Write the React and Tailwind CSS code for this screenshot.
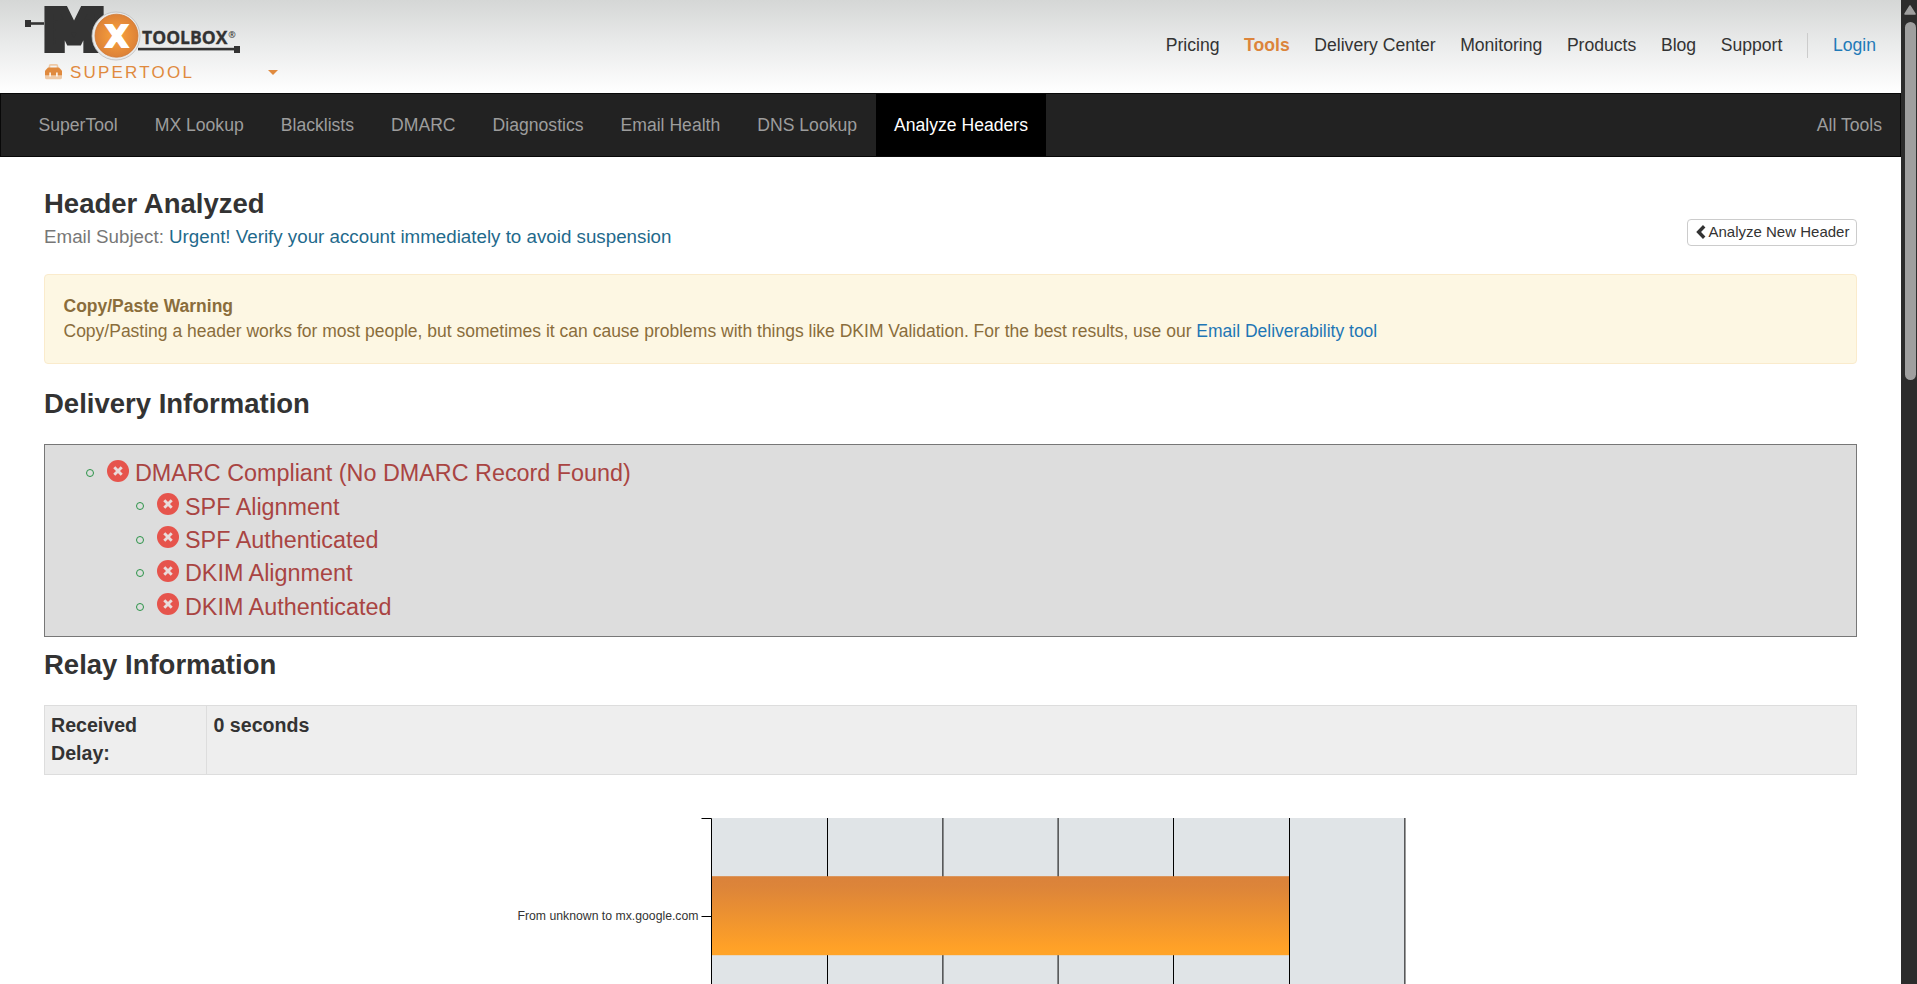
const topLinks = ["Pricing", "Tools", "Delivery Center", "Monitoring", "Products", "Blog", "Support"];

const toolLinks = [
  "SuperTool",
  "MX Lookup",
  "Blacklists",
  "DMARC",
  "Diagnostics",
  "Email Health",
  "DNS Lookup",
  "Analyze Headers",
];

function Logo() {
  return (
    <svg className="block overflow-visible" width="240" height="61" viewBox="0 0 240 61" role="img">
      <defs>
        <radialGradient id="disc">
          <stop offset="0" stopColor="#fba43c" />
          <stop offset="1" stopColor="#dd8238" />
        </radialGradient>
      </defs>
      <rect x="25" y="20" width="6" height="7" fill="#333" />
      <rect x="31" y="22.2" width="13" height="2.6" fill="#333" />
      <text
        transform="translate(43.6 49.3) scale(1.17 1)"
        fontFamily="'DejaVu Sans', sans-serif"
        fontWeight="700"
        fontSize="52.5"
        fill="#333"
        stroke="#333"
        strokeWidth="8"
        strokeMiterlimit="2"
      >
        M
      </text>
      <rect x="138" y="47.8" width="97" height="2.6" fill="#333" />
      <rect x="234" y="46" width="6" height="7" fill="#333" />
      <circle cx="116" cy="36" r="24" fill="#e9eaea" stroke="#bdbdbd" strokeWidth="0.8" />
      <circle cx="116.5" cy="35.7" r="21.5" fill="url(#disc)" stroke="#d07a35" strokeWidth="0.8" />
      <text
        x="116.7"
        y="46.5"
        textAnchor="middle"
        fontFamily="'DejaVu Sans', sans-serif"
        fontWeight="700"
        fontSize="30"
        fill="#fff"
        stroke="#fff"
        strokeWidth="2"
      >
        X
      </text>
      <text
        x="142"
        y="44.2"
        fontFamily="'Open Sans', sans-serif"
        fontWeight="700"
        fontSize="18"
        fill="#333"
        stroke="#333"
        strokeWidth="0.3"
        textLength="85.5"
        lengthAdjust="spacingAndGlyphs"
      >
        TOOLBOX
      </text>
      <text x="228.200" y="38" fontFamily="'Open Sans', sans-serif" fontWeight="600" fontSize="9" fill="#333">
        ®
      </text>
    </svg>
  );
}

function ToolboxIcon() {
  return (
    <svg width="17" height="16" viewBox="0 0 17 16" fill="none">
      <path d="M4.5 4V2Q4.5 .9 5.6 .9H11.4Q12.5 .9 12.5 2V4" stroke="#efc9a5" strokeWidth="1.6" />
      <path d="M0 10h17v3.800q0 1.400-1.400 1.400H1.400Q0 15.200 0 13.800z" fill="#efc9a5" />
      <path d="M3 3.600h11l3 3.200V11.200H0V6.800z" fill="#e08a3e" />
      <path d="M5.100 8.400v4M11.900 8.400v4" stroke="#fff" strokeWidth="1.500" />
    </svg>
  );
}

function FailIcon() {
  return (
    <svg className="mt-[3.500px] mr-[6px] shrink-0" width="22" height="22" viewBox="0 0 22 22">
      <circle cx="11" cy="11" r="11" fill="#e6544c" />
      <path d="M8.300 8.300l5.400 5.400M13.700 8.300l-5.400 5.400" stroke="#e9dcdb" strokeWidth="2.900" strokeLinecap="square" />
    </svg>
  );
}

function Bullet() {
  return <span className="mt-[13px] mr-[13px] size-[8px] shrink-0 rounded-full border border-[#2b9348]" />;
}

function Check({ children, nested }) {
  return (
    <li className={nested ? "flex h-[33.400px] pl-[91px]" : "flex h-[33.400px] pl-[41px]"}>
      <Bullet />
      <FailIcon />
      <span className="mt-[1.200px]">{children}</span>
    </li>
  );
}

function RelayChart() {
  const lines = [827.500, 942.900, 1058.100, 1173.500, 1404.900];
  return (
    <svg className="mt-[43px] block" width="1813" height="166" viewBox="44 818 1813 166">
      <defs>
        <linearGradient id="bar" x1="0" y1="0" x2="0" y2="1">
          <stop offset="0" stopColor="#da823b" />
          <stop offset="0.15" stopColor="#dd8539" />
          <stop offset="0.9" stopColor="#ffa127" />
          <stop offset="1" stopColor="#ffa429" />
        </linearGradient>
      </defs>
      <rect x="711.500" y="818" width="693.500" height="170" fill="#e0e4e7" />
      {lines.map((x) => (
        <path key={x} d={`M${x} 818V984`} stroke="#000" strokeWidth="1" />
      ))}
      <rect x="711.500" y="876.200" width="577.500" height="79" fill="url(#bar)" />
      <path d="M1289.500 818V984" stroke="#000" />
      <path d="M701.500 818.500H711.500V984M701.500 916.500H711.500" stroke="#000" fill="none" />
      <text
        x="698.500"
        y="920.300"
        textAnchor="end"
        textLength="181"
        lengthAdjust="spacingAndGlyphs"
        fontSize="13"
        fill="#333"
      >
        From unknown to mx.google.com
      </text>
    </svg>
  );
}

export default function App() {
  return (
    <div className="flex h-[984px] w-[1917px] overflow-hidden bg-white font-['Liberation_Sans',Arial,sans-serif] text-[17.6px] text-[#333]">
      <div className="w-[1901px] shrink-0">
        <header className="flex h-[93px] justify-between bg-linear-to-b from-[#d5d7d6] via-[#ebecec] to-white">
          <div>
            <Logo />
            <div className="mt-[-1px] flex h-[24px] items-center pl-[45px] leading-[24px] text-[#e08a3e]">
              <ToolboxIcon />
              <span className="mt-px ml-[8px] w-[198px] text-[17px] tracking-[2.2px]">SUPERTOOL</span>
              <svg width="10" height="5" viewBox="0 0 10 5">
                <path d="M0 0h10L5 5z" fill="#e08a3e" />
              </svg>
            </div>
          </div>
          <nav className="flex h-[25px] gap-[24.6px] pt-[33px] pr-[25px] leading-[25px] whitespace-nowrap">
            {topLinks.map((label) => (
              <a key={label} className={label === "Tools" ? "font-bold text-[#dc843b]" : ""}>
                {label}
              </a>
            ))}
            <a className="h-[25px] border-l border-[#ccc] pl-[25px] text-[#1f7ab8]">Login</a>
          </nav>
        </header>

        <nav className="flex h-[64px] gap-px border border-[#080808] bg-[#222] pr-[18px] pl-[19.500px] leading-[62px] whitespace-nowrap text-[#9d9d9d]">
          {toolLinks.map((label) => (
            <a key={label} className={label === "Analyze Headers" ? "bg-black px-[18px] text-white" : "px-[18px]"}>
              {label}
            </a>
          ))}
          <a className="ml-auto">All Tools</a>
        </nav>

        <main className="px-[44px] pt-[32px]">
          <div className="flex h-[85px] justify-between">
            <div>
              <h1 className="text-[27.5px] leading-[30px] font-bold">Header Analyzed</h1>
              <p className="mt-[5px] text-[18.750px] leading-[26px] text-[#777]">
                Email Subject: <span className="text-[#1f6a8c]">Urgent! Verify your account immediately to avoid suspension</span>
              </p>
            </div>
            <button className="mt-[30px] flex h-[27px] w-[170px] items-center rounded-[4px] border border-[#ccc] pl-[7.500px] text-[15px] leading-[25px] whitespace-nowrap">
              <svg className="mr-[3px] mb-px" width="10" height="14" viewBox="0 0 10 14">
                <path d="M8.200 1.200L2.600 7l5.600 5.800" fill="none" stroke="#333" strokeWidth="3.400" />
              </svg>
              <span className="mb-[2px]">Analyze New Header</span>
            </button>
          </div>

          <section className="h-[90px] rounded-[4px] border border-[#faebcc] bg-[#fdf7e3] px-[18.500px] pt-[19px] text-[17.500px] leading-[25px] text-[#8a6d3b]">
            <p className="font-bold">Copy/Paste Warning</p>
            <p>
              Copy/Pasting a header works for most people, but sometimes it can cause problems with things like DKIM
              Validation. For the best results, use our <a className="text-[#1f76b5]">Email Deliverability tool</a>
            </p>
          </section>

          <h2 className="mt-[25px] mb-[25px] text-[27.5px] leading-[30px] font-bold">Delivery Information</h2>
          <ul className="h-[193px] border border-[#777] bg-[#ddd] pt-[11px] text-[23.370px] leading-[33.4px] text-[#a94442]">
            <Check>DMARC Compliant (No DMARC Record Found)</Check>
            <Check nested>SPF Alignment</Check>
            <Check nested>SPF Authenticated</Check>
            <Check nested>DKIM Alignment</Check>
            <Check nested>DKIM Authenticated</Check>
          </ul>

          <h2 className="mt-[13px] mb-[25px] text-[27.5px] leading-[30px] font-bold">Relay Information</h2>
          <div className="grid h-[70px] grid-cols-[162px_1fr] border border-[#ddd] bg-[#eee] text-[19.6px] leading-[28.3px] font-bold">
            <div className="border-r border-[#ddd] pt-[5px] pr-[40px] pl-[6px]">Received Delay:</div>
            <div className="pt-[5px] pl-[6.500px]">0 seconds</div>
          </div>

          <RelayChart />
        </main>
      </div>

      <div className="flex w-[16px] shrink-0 flex-col items-center bg-[#2c2c2c] pt-[5px] pl-[2px]">
        <svg width="12" height="10" viewBox="0 0 12 10">
          <path d="M6 1L11 9H1z" fill="#9f9f9f" stroke="#9f9f9f" strokeWidth="1.500" strokeLinejoin="round" />
        </svg>
        <div className="mt-[7px] h-[358px] w-[11px] rounded-full bg-[#9f9f9f]" />
      </div>
    </div>
  );
}
